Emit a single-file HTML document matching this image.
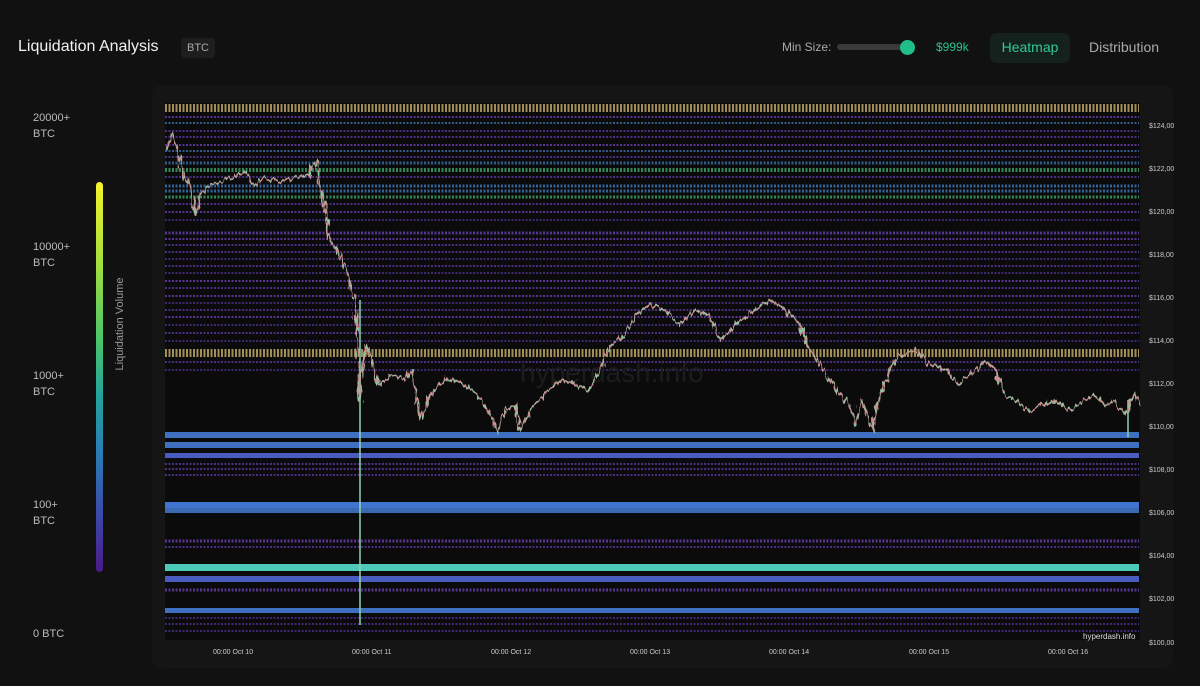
<!DOCTYPE html>
<html><head><meta charset="utf-8"><style>
body{margin:0;width:1200px;height:686px;background:#0f0f0f;font-family:"Liberation Sans",sans-serif;overflow:hidden;position:relative;color:#ddd}
.abs{position:absolute}
</style></head><body>
<div class="abs" style="left:0;top:0;width:1200px;height:686px;background:#111111"></div>
<div class="abs" style="left:18px;top:38px;font-size:16px;color:#f2f2f2">Liquidation Analysis</div>
<div class="abs" style="left:181px;top:38px;width:34px;height:20px;background:#1e1e1e;border-radius:4px;font-size:11px;color:#aaa;text-align:center;line-height:20px">BTC</div>
<div class="abs" style="left:782px;top:40px;font-size:12px;color:#aaa">Min Size:</div>
<div class="abs" style="left:837px;top:44px;width:70px;height:6px;background:#3a3a3a;border-radius:3px"></div>
<div class="abs" style="left:900px;top:40px;width:15px;height:15px;background:#1fbf88;border-radius:50%"></div>
<div class="abs" style="left:936px;top:40px;font-size:12px;color:#2bc38f">$999k</div>
<div class="abs" style="left:990px;top:33px;width:80px;height:30px;background:#15211c;border-radius:7px;font-size:14px;color:#33c995;text-align:center;line-height:29px">Heatmap</div>
<div class="abs" style="left:1089px;top:39px;font-size:14px;color:#aaa">Distribution</div>
<div class="abs" style="left:152px;top:85px;width:1021px;height:583px;background:#151515;border-radius:10px"></div>
<div class="abs" style="left:33px;top:110px;font-size:11px;line-height:16px;color:#bbb">20000+<br>BTC</div>
<div class="abs" style="left:33px;top:239px;font-size:11px;line-height:16px;color:#bbb">10000+<br>BTC</div>
<div class="abs" style="left:33px;top:368px;font-size:11px;line-height:16px;color:#bbb">1000+<br>BTC</div>
<div class="abs" style="left:33px;top:497px;font-size:11px;line-height:16px;color:#bbb">100+<br>BTC</div>
<div class="abs" style="left:33px;top:628px;font-size:11px;color:#bbb">0 BTC</div>
<div class="abs" style="left:96px;top:182px;width:7px;height:390px;border-radius:4px;background:linear-gradient(#f6f42a,#a8e03a 20%,#4cc56a 40%,#23a39a 55%,#2a7bb5 70%,#3a4aa8 85%,#4a1a8a)"></div>
<div class="abs" style="left:60px;top:318px;width:120px;text-align:center;font-size:11px;color:#999;transform:rotate(-90deg)">Liquidation Volume</div>
<svg class="abs" style="left:0;top:0" width="1200" height="686">
<defs><filter id="jit" x="-5%" y="-5%" width="110%" height="110%"><feTurbulence type="fractalNoise" baseFrequency="0.35 0.08" numOctaves="2" seed="3"/><feDisplacementMap in="SourceGraphic" scale="9" xChannelSelector="R" yChannelSelector="G"/></filter></defs>
<rect x="165" y="103" width="975" height="537" fill="#0b0b0b"/>
<g stroke-dasharray="2 1.5" opacity=".8">
<g stroke-width="2" fill="none">
<line x1="165" x2="1139" y1="108" y2="108" stroke="#c7b06a" stroke-width="8"/>
<line x1="165" x2="1139" y1="117" y2="117" stroke="#6a3fb3"/>
<line x1="165" x2="1139" y1="123" y2="123" stroke="#3e6fa8"/>
<line x1="165" x2="1139" y1="131" y2="131" stroke="#5a3aa0"/>
<line x1="165" x2="1139" y1="137" y2="137" stroke="#5a3aa0"/>
<line x1="165" x2="1139" y1="145" y2="145" stroke="#6a3fb3"/>
<line x1="165" x2="1139" y1="151" y2="151" stroke="#3e6fa8"/>
<line x1="165" x2="1139" y1="157" y2="157" stroke="#5a3aa0"/>
<line x1="165" x2="1139" y1="163" y2="163" stroke="#3e6fa8" stroke-width="3"/>
<line x1="165" x2="1139" y1="170" y2="170" stroke="#3fa86a" stroke-width="4"/>
<line x1="165" x2="1139" y1="177" y2="177" stroke="#5a3aa0"/>
<line x1="165" x2="1139" y1="186" y2="186" stroke="#3e7ab8" stroke-width="3"/>
<line x1="165" x2="1139" y1="191" y2="191" stroke="#3e7ab8" stroke-width="3"/>
<line x1="165" x2="1139" y1="197" y2="197" stroke="#3fa86a" stroke-width="3"/>
<line x1="165" x2="1139" y1="204" y2="204" stroke="#5a3aa0"/>
<line x1="165" x2="1139" y1="212" y2="212" stroke="#6a3fb3"/>
<line x1="165" x2="1139" y1="220" y2="220" stroke="#4a2f8a"/>
<line x1="165" x2="1139" y1="233" y2="233" stroke="#6a3fb3" stroke-width="3"/>
<line x1="165" x2="1139" y1="239" y2="239" stroke="#6a3fb3"/>
<line x1="165" x2="1139" y1="245" y2="245" stroke="#5a3aa0"/>
<line x1="165" x2="1139" y1="252" y2="252" stroke="#5a3aa0"/>
<line x1="165" x2="1139" y1="259" y2="259" stroke="#4a2f8a"/>
<line x1="165" x2="1139" y1="266" y2="266" stroke="#5a3aa0"/>
<line x1="165" x2="1139" y1="273" y2="273" stroke="#4a2f8a"/>
<line x1="165" x2="1139" y1="281" y2="281" stroke="#6a3fb3"/>
<line x1="165" x2="1139" y1="288" y2="288" stroke="#5a3aa0"/>
<line x1="165" x2="1139" y1="296" y2="296" stroke="#6a3fb3"/>
<line x1="165" x2="1139" y1="303" y2="303" stroke="#4a2f8a"/>
<line x1="165" x2="1139" y1="310" y2="310" stroke="#5a3aa0"/>
<line x1="165" x2="1139" y1="317" y2="317" stroke="#6a3fb3"/>
<line x1="165" x2="1139" y1="325" y2="325" stroke="#4a2f8a"/>
<line x1="165" x2="1139" y1="333" y2="333" stroke="#5a3aa0"/>
<line x1="165" x2="1139" y1="341" y2="341" stroke="#4a2f8a"/>
<line x1="165" x2="1139" y1="353" y2="353" stroke="#c7b06a" stroke-width="8"/>
<line x1="165" x2="1139" y1="362" y2="362" stroke="#5a3aa0"/>
<line x1="165" x2="1139" y1="370" y2="370" stroke="#4a2f8a"/>
<line x1="165" x2="1139" y1="464" y2="464" stroke="#5a3aa0"/>
<line x1="165" x2="1139" y1="469" y2="469" stroke="#5a3aa0"/>
<line x1="165" x2="1139" y1="475" y2="475" stroke="#5a3aa0"/>
<line x1="165" x2="1139" y1="541" y2="541" stroke="#6a3fb3" stroke-width="3"/>
<line x1="165" x2="1139" y1="547" y2="547" stroke="#5a3aa0"/>
<line x1="165" x2="1139" y1="590" y2="590" stroke="#6a3fb3" stroke-width="3"/>
<line x1="165" x2="1139" y1="618" y2="618" stroke="#4a2f8a"/>
<line x1="165" x2="1139" y1="624" y2="624" stroke="#4a2f8a"/>
<line x1="165" x2="1139" y1="631" y2="631" stroke="#4a2f8a"/>
</g></g>
<rect x="165" y="432" width="974" height="6" fill="#3f6fc0"/>
<rect x="165" y="442" width="974" height="6" fill="#3f6fc0"/>
<rect x="165" y="453" width="974" height="5" fill="#4a5cc0"/>
<rect x="165" y="502" width="974" height="6" fill="#3f74d0"/>
<rect x="165" y="508" width="974" height="5" fill="#3a6ab0"/>
<rect x="165" y="564" width="974" height="7" fill="#4cc9b8"/>
<rect x="165" y="576" width="974" height="6" fill="#4a5cc0"/>
<rect x="165" y="608" width="974" height="5" fill="#3f6fc0"/>
<text x="520" y="382" font-size="28" fill="#1c1c1c" font-family="Liberation Sans">hyperdash.info</text>
<line x1="360" y1="300" x2="360" y2="625" stroke="#8fd3b0" stroke-width="1.5"/>
<line x1="1128" y1="400" x2="1128" y2="437" stroke="#8fd3b0" stroke-width="1.5"/>
<g filter="url(#jit)">
<polyline fill="none" stroke="#c98f8f" stroke-width="2" stroke-linejoin="round" points="167,150 172,133 178,150 183,175 190,185 196,215 200,195 210,185 230,178 245,172 255,185 265,178 280,183 295,177 310,175 316,160 320,185 325,210 330,240 340,255 348,275 352,290 355,300 358,350 360,400 362,370 366,345 372,360 378,385 390,375 405,378 412,370 420,420 430,395 445,378 460,382 478,395 490,415 498,432 505,410 515,405 520,432 530,410 545,395 560,380 575,385 590,390 600,370 610,345 625,335 635,315 650,305 665,310 680,325 695,310 710,315 720,340 730,330 740,320 755,310 770,300 785,310 800,325 810,350 820,365 830,380 840,395 850,405 855,425 862,400 872,430 880,395 888,375 895,360 905,355 915,350 930,365 945,370 960,385 975,370 985,360 995,370 1005,395 1015,400 1030,412 1040,405 1055,400 1070,410 1085,400 1095,395 1105,405 1115,400 1122,410 1128,415 1130,400 1136,395 1140,405"/>
<polyline fill="none" stroke="#7fd0a5" stroke-width="1.3" stroke-dasharray="3 4" points="167,150 172,133 178,150 183,175 190,185 196,215 200,195 210,185 230,178 245,172 255,185 265,178 280,183 295,177 310,175 316,160 320,185 325,210 330,240 340,255 348,275 352,290 355,300 358,350 360,400 362,370 366,345 372,360 378,385 390,375 405,378 412,370 420,420 430,395 445,378 460,382 478,395 490,415 498,432 505,410 515,405 520,432 530,410 545,395 560,380 575,385 590,390 600,370 610,345 625,335 635,315 650,305 665,310 680,325 695,310 710,315 720,340 730,330 740,320 755,310 770,300 785,310 800,325 810,350 820,365 830,380 840,395 850,405 855,425 862,400 872,430 880,395 888,375 895,360 905,355 915,350 930,365 945,370 960,385 975,370 985,360 995,370 1005,395 1015,400 1030,412 1040,405 1055,400 1070,410 1085,400 1095,395 1105,405 1115,400 1122,410 1128,415 1130,400 1136,395 1140,405"/>
</g>
<g font-size="7" fill="#ccc" font-family="Liberation Sans">
<text x="1149" y="128">$124,00</text><text x="1149" y="171">$122,00</text><text x="1149" y="214">$120,00</text><text x="1149" y="257">$118,00</text><text x="1149" y="300">$116,00</text><text x="1149" y="343">$114,00</text><text x="1149" y="386">$112,00</text><text x="1149" y="429">$110,00</text><text x="1149" y="472">$108,00</text><text x="1149" y="515">$106,00</text><text x="1149" y="558">$104,00</text><text x="1149" y="601">$102,00</text><text x="1149" y="645">$100,00</text>
<text x="213" y="654">00:00 Oct 10</text><text x="352" y="654">00:00 Oct 11</text><text x="491" y="654">00:00 Oct 12</text><text x="630" y="654">00:00 Oct 13</text><text x="769" y="654">00:00 Oct 14</text><text x="909" y="654">00:00 Oct 15</text><text x="1048" y="654">00:00 Oct 16</text>
<text x="1083" y="639" font-size="8" fill="#ddd">hyperdash.info</text>
</g>
</svg>
</body></html>
